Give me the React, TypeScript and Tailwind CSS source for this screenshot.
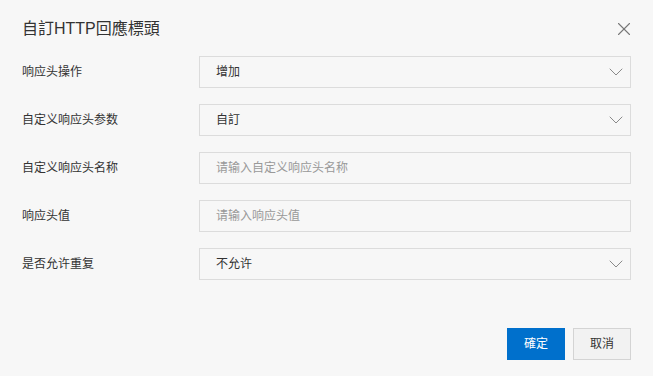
import { ChevronDown, X } from "lucide-react";

const font = { fontFamily: '"Liberation Sans", "Noto Sans CJK SC", sans-serif' };

function SelectBox({ value }: { value: string }) {
  return (
    <div className="h-8 flex items-center justify-between border border-[#dcdcdc] pl-4 pr-[2px] text-xs text-[#333]">
      <span>{value}</span>
      <ChevronDown size={24} strokeWidth={1} className="text-[#8a8a8a]" />
    </div>
  );
}

function TextBox({ placeholder }: { placeholder: string }) {
  return (
    <div className="h-8 flex items-center border border-[#dcdcdc] pl-4 text-xs text-[#999]">
      {placeholder}
    </div>
  );
}

export default function App() {
  const rows = [
    { label: "响应头操作", field: <SelectBox value="增加" /> },
    { label: "自定义响应头参数", field: <SelectBox value="自訂" /> },
    { label: "自定义响应头名称", field: <TextBox placeholder="请输入自定义响应头名称" /> },
    { label: "响应头值", field: <TextBox placeholder="请输入响应头值" /> },
    { label: "是否允许重复", field: <SelectBox value="不允许" /> },
  ];

  return (
    <div className="w-[653px] h-[376px] bg-[#f7f7f7] px-[22px] pt-[18px] text-[#333]" style={font}>
      <div className="flex items-center justify-between h-[22px]">
        <h1 className="text-base text-[#333]">自訂HTTP回應標頭</h1>
        <X size={22} strokeWidth={1.2} className="text-[#777] mr-[-4px]" />
      </div>
      <div className="mt-4 flex flex-col gap-4 w-[609px]">
        {rows.map((r) => (
          <div key={r.label} className="flex items-center">
            <div className="w-[177px] text-xs text-[#333]">{r.label}</div>
            <div className="flex-1">{r.field}</div>
          </div>
        ))}
      </div>
      <div className="mt-12 flex justify-end gap-2 w-[609px]">
        <button className="w-[58px] h-8 bg-[#0070cc] text-white text-xs">確定</button>
        <button className="w-[58px] h-8 bg-[#f2f2f2] border border-[#d4d4d4] text-[#333] text-xs">取消</button>
      </div>
    </div>
  );
}
